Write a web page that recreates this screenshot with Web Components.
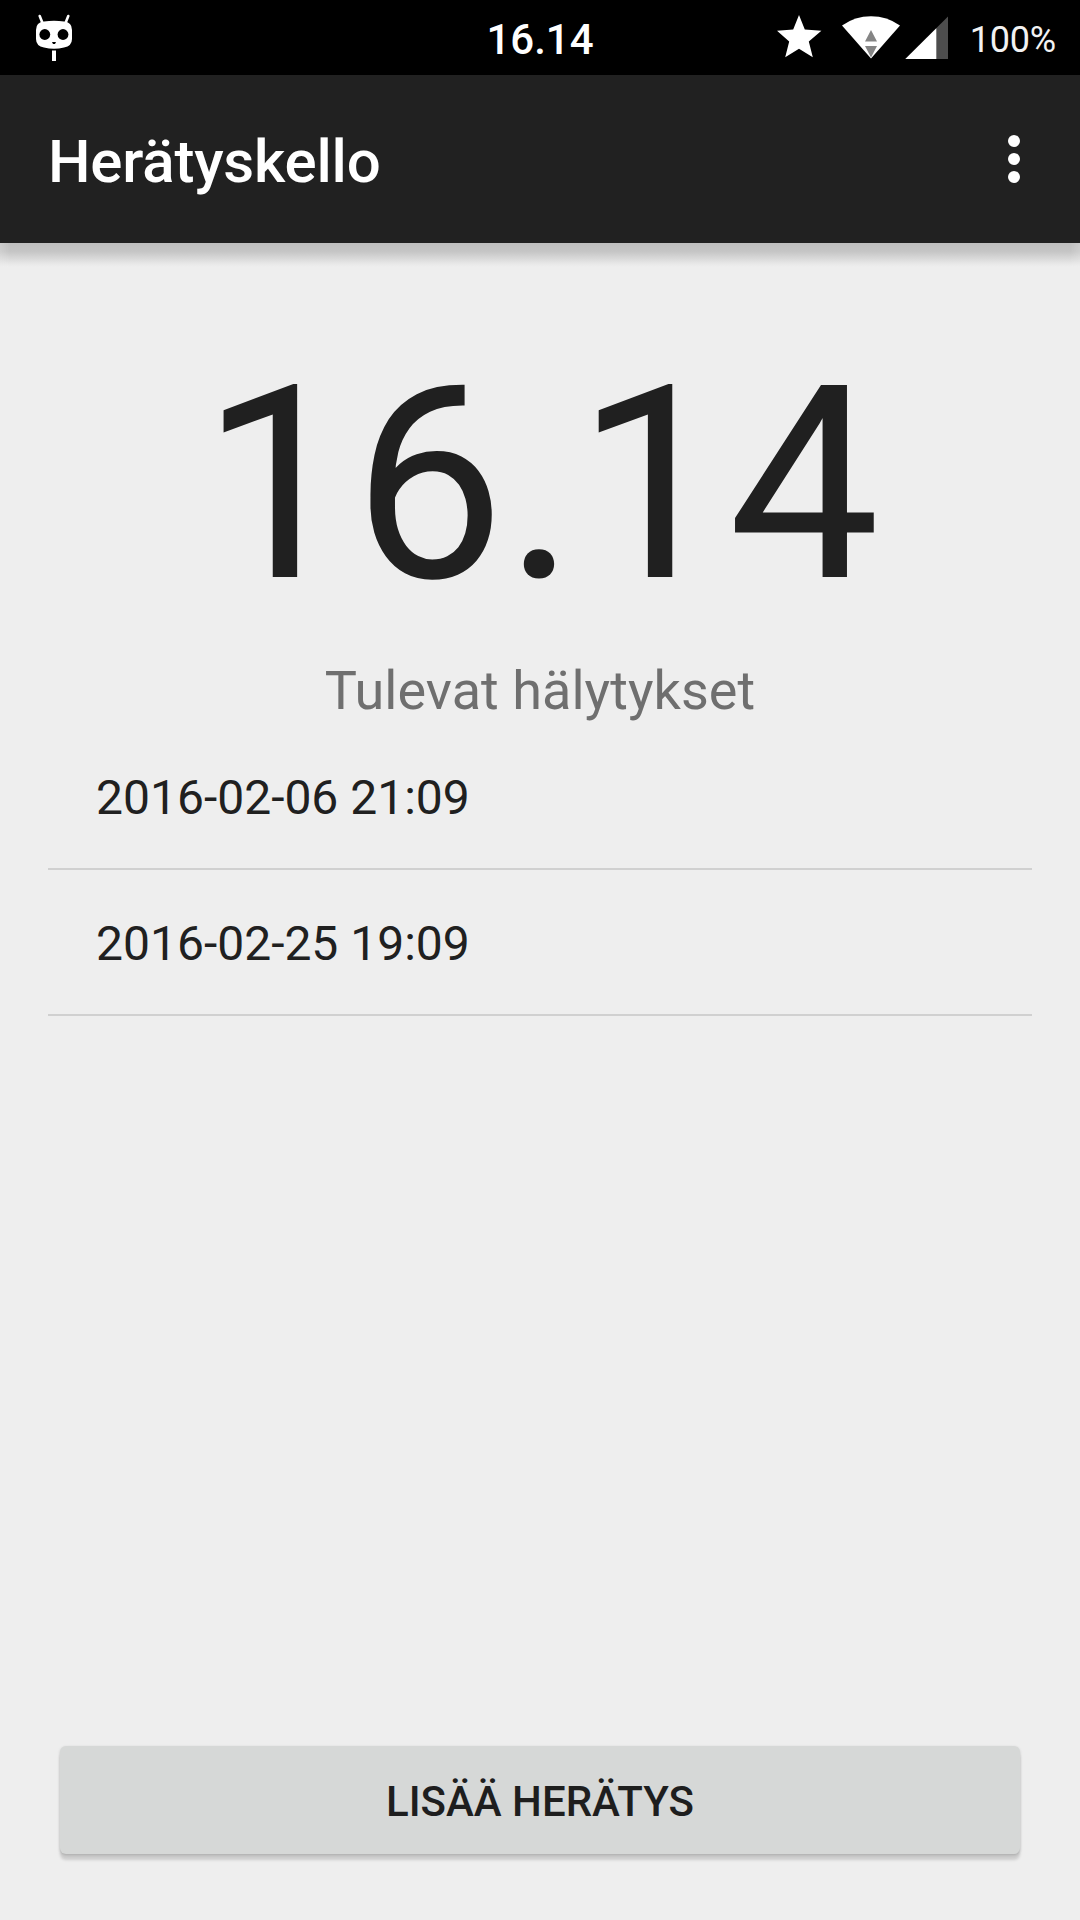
<!DOCTYPE html>
<html lang="fi">
<head>
<meta charset="utf-8">
<title>Herätyskello</title>
<style>
html,body{margin:0;height:100%;background:#eee}
body{font-family:Roboto,"Noto Sans",sans-serif;overflow:hidden}
</style>
</head>
<body>
<alarm-screen></alarm-screen>
<script>
const define = (name, html) => customElements.define(name, class extends HTMLElement {
  constructor() {
    super();
    const t = document.createElement('template');
    t.innerHTML = html;
    this.attachShadow({mode: 'open'}).append(t.content.cloneNode(true));
  }
});

define('status-bar', `
<style>
:host{display:grid;grid-template-columns:1fr auto 1fr;height:75px;background:#000;color:#fff;box-sizing:border-box;padding:0 24px 0 36px}
svg{display:block}
.clock{font-size:42px;font-weight:500;line-height:79px;margin-left:-12px}
.right{display:flex;justify-content:flex-end}
.battery{font-size:36px;line-height:81px;letter-spacing:-.2px;color:#f2f2f2;margin-left:21px}
</style>
<svg width="36" height="75" viewBox="36 0 36 75">
  <path d="M39.7 16l2.6 6.5M68.3 16l-2.6 6.5" stroke="#fff" stroke-width="2.6" stroke-linecap="round"/>
  <path d="M44 21.5Q54 20 64 21.5Q72 22 72 30V39Q72 46 64 47.5Q54 50 44 47.5Q36 46 36 39V30Q36 22 44 21.5Z" fill="#fff"/>
  <circle cx="44.8" cy="34.5" r="5.4"/><circle cx="63" cy="34.5" r="5.4"/>
  <path d="M52 42H56L55 44H53Z"/>
  <path d="M52 50.5H56V61H52Z" fill="#fff"/>
</svg>
<div class="clock"><slot name="clock"></slot></div>
<div class="right">
  <svg width="172" height="75" viewBox="777 0 172 75">
    <path d="M799 15L804.8 29.4L821.4 30.8L808.8 41.6L812.8 57.2L799 48.8L785.2 57.2L789.2 41.6L777 30.8L793.2 29.4Z" fill="#fff"/>
    <path d="M871 58.5L842 25.5Q855 16.3 871 16.3Q887 16.3 900 25.5Z" fill="#fff"/>
    <path d="M871 30L877 41.6H865ZM865 46H877L871 57.5Z" fill="#858585"/>
    <path d="M905.3 59L948 16.5V59Z" fill="#4d4d4d"/>
    <path d="M905.3 59L936.3 28.2V59Z" fill="#fff"/>
  </svg>
  <span class="battery"><slot name="battery"></slot></span>
</div>`);

define('overflow-menu', `
<style>
:host{display:flex;flex-direction:column;gap:6px}
i{width:12px;height:12px;border-radius:50%;background:#fff}
</style><i></i><i></i><i></i>`);

define('app-bar', `
<style>
:host{display:flex;justify-content:space-between;align-items:center;height:168px;box-sizing:border-box;padding:0 60px 0 48px;background:#212121;color:#fff}
.title{font-size:60px;font-weight:500;line-height:72px;margin-top:5px;letter-spacing:-.2px}
</style><div class="title"><slot></slot></div><overflow-menu></overflow-menu>`);

define('big-clock', `
<style>:host{display:block;text-align:center;font-size:270px;line-height:316px;color:#202020;letter-spacing:.15px;padding-left:1px}</style><slot></slot>`);

define('section-title', `
<style>:host{display:block;text-align:center;font-size:54px;line-height:64px;color:#6f6f6f;margin-top:16px;letter-spacing:.05px}</style><slot></slot>`);

define('alarm-item', `
<style>:host{display:block;box-sizing:border-box;height:146px;line-height:147px;padding-left:48px;font-size:48px;color:#202020;border-bottom:2px solid #d0d0d0}</style><slot></slot>`);

define('raised-button', `
<style>
:host{display:block}
button{display:block;width:100%;height:108px;border:0;border-radius:6px;background:#d6d8d7;color:#1e1e1e;padding:3px 0 0;font:500 42px/105px Roboto,"Noto Sans",sans-serif;text-transform:uppercase;
box-shadow:0 6px 3px 0 rgba(0,0,0,.14),0 1px 3px rgba(0,0,0,.17)}
</style><button><slot></slot></button>`);

define('alarm-screen', `
<style>
:host{display:flex;flex-direction:column;width:1080px;height:1920px;background:#eee}
.shade{height:24px;margin-bottom:-24px;background:linear-gradient(#bfbfbf,#c5c5c5 35%,#d9d9d9 65%,#e9e9e9 88%,#eee);
  mask-image:linear-gradient(90deg,rgba(0,0,0,.75),#000 9px,#000 calc(100% - 9px),rgba(0,0,0,.75))}
main{flex:1;display:flex;flex-direction:column;padding:84px 48px 66px}
.list{margin-top:1px}
raised-button{margin:auto 12px 0}
</style>
<status-bar><span slot="clock">16.14</span><span slot="battery">100%</span></status-bar>
<app-bar>Herätyskello</app-bar>
<div class="shade"></div>
<main>
  <big-clock>16.14</big-clock>
  <section-title>Tulevat hälytykset</section-title>
  <div class="list"><alarm-item>2016-02-06 21:09</alarm-item><alarm-item>2016-02-25 19:09</alarm-item></div>
  <raised-button>Lisää herätys</raised-button>
</main>`);
</script>
</body>
</html>
